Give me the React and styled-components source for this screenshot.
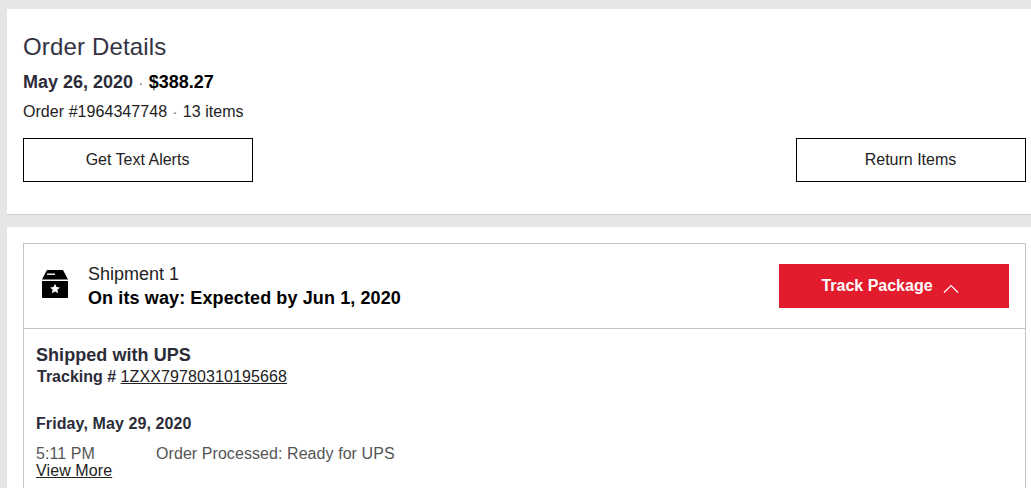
import styled, { createGlobalStyle } from 'styled-components'

const GlobalStyle = createGlobalStyle`
  html, body {
    margin: 0;
    padding: 0;
    height: 100%;
    overflow: hidden;
    background: #e5e5e5;
  }
  body {
    font-family: "Liberation Sans", Arial, sans-serif;
    color: #333;
  }
`

const Page = styled.div`
  padding: 9px 0 0 7px;
  height: 488px;
  box-sizing: border-box;
  overflow: hidden;
`

const SummaryCard = styled.section`
  background: #fff;
  height: 206px;
  box-sizing: border-box;
  padding: 24px 5px 0 16px;
  border-bottom: 1px solid #ccc;
  margin-bottom: 12px;
`

const PageTitle = styled.h1`
  margin: 0;
  font-size: 24px;
  font-weight: 400;
  line-height: 28px;
  letter-spacing: 0.15px;
  color: #333344;
`

const OrderMeta = styled.div`
  margin-top: 11px;
  font-size: 18px;
  font-weight: 700;
  line-height: 20px;
  color: #2c2c38;

  & strong {
    color: #000;
  }
`

const Dot = styled.span`
  font-weight: 400;
  color: #666;
  font-size: 14px;
  margin: 0 5.5px;
`

const OrderInfo = styled.div`
  margin-top: 9px;
  font-size: 16px;
  line-height: 20px;
  letter-spacing: 0.05px;
  color: #222;
`

const ActionRow = styled.div`
  display: flex;
  justify-content: space-between;
  margin-top: 16px;
`

const OutlineButton = styled.button`
  width: 230px;
  height: 44px;
  background: #fff;
  border: 1px solid #000;
  border-radius: 0;
  font-family: inherit;
  font-size: 16px;
  color: #222;
  padding: 0 1px 0 0;
`

const ShipmentCard = styled.section`
  background: #fff;
  height: 261px;
  box-sizing: border-box;
  padding: 16px 5px 0 16px;
`

const ShipmentBox = styled.div`
  border: 1px solid #c4c4c4;
  border-bottom: none;
  height: 245px;
  box-sizing: border-box;
`

const ShipmentHeader = styled.header`
  display: flex;
  align-items: center;
  height: 84px;
  padding: 0 16px 0 18px;
  border-bottom: 1px solid #c4c4c4;
`

const BoxIcon = styled.svg`
  width: 26px;
  height: 28px;
  flex: none;
  margin: 0 20px 4px 0;
`

const ShipmentText = styled.div`
  flex: 1;
`

const ShipmentName = styled.div`
  font-size: 18px;
  line-height: 24px;
  color: #222;
`

const ShipmentStatus = styled.div`
  font-size: 18px;
  font-weight: 700;
  line-height: 24px;
  letter-spacing: 0.11px;
  color: #000;
`

const TrackButton = styled.button`
  width: 230px;
  height: 44px;
  display: flex;
  align-items: center;
  justify-content: center;
  gap: 10px;
  background: #e31c2d;
  border: none;
  border-radius: 0;
  color: #fff;
  font-family: inherit;
  font-size: 16px;
  font-weight: 700;
  padding: 0 8px 0 0;
`

const Chevron = styled.svg`
  width: 16px;
  height: 9px;
  margin-top: 5px;
`

const ShipmentBody = styled.div`
  padding: 16px 12px 0;
`

const Carrier = styled.div`
  font-size: 18px;
  font-weight: 700;
  line-height: 20px;
  letter-spacing: 0.05px;
  color: #2c2c38;
`

const Tracking = styled.div`
  margin-top: 1px;
  font-size: 16px;
  line-height: 22px;
  color: #2c2c38;

  & b {
    font-weight: 700;
    margin-left: 1px;
  }
`

const TextLink = styled.a`
  color: #222;
  text-decoration: underline;
  letter-spacing: 0.1px;
`

const DayHeading = styled.div`
  margin-top: 26px;
  font-size: 16px;
  font-weight: 700;
  line-height: 20px;
  letter-spacing: 0.1px;
  color: #2c2c38;
`

const EventRow = styled.div`
  display: grid;
  grid-template-columns: 120px 1fr;
  margin-top: 10px;
  font-size: 16px;
  line-height: 20px;
  letter-spacing: 0.07px;
  color: #555;
`

const ViewMore = styled(TextLink)`
  display: block;
  margin-top: -1px;
  font-size: 16px;
  line-height: 16px;
`

export default function App() {
  return (
    <>
      <GlobalStyle />
      <Page>
        <SummaryCard>
          <PageTitle>Order Details</PageTitle>
          <OrderMeta>
            May 26, 2020<Dot>·</Dot>
            <strong>$388.27</strong>
          </OrderMeta>
          <OrderInfo>
            Order #1964347748<Dot>·</Dot>13 items
          </OrderInfo>
          <ActionRow>
            <OutlineButton type="button">Get Text Alerts</OutlineButton>
            <OutlineButton type="button">Return Items</OutlineButton>
          </ActionRow>
        </SummaryCard>
        <ShipmentCard>
          <ShipmentBox>
            <ShipmentHeader>
              <BoxIcon viewBox="0 0 26 28" aria-hidden="true">
                <path d="M5 0h16l5 9.500H0z" fill="#000" />
                <path d="M0 11h26v16a1 1 0 0 1-1 1H1a1 1 0 0 1-1-1z" fill="#000" />
                <path d="M5 3.500h8v1.400H5z" fill="#fff" />
                <path
                  d="M13 13.800l1.500 3.200 3.500.4-2.600 2.400.7 3.500-3.100-1.800-3.100 1.800.7-3.500-2.600-2.400 3.500-.4z"
                  fill="#fff"
                />
              </BoxIcon>
              <ShipmentText>
                <ShipmentName>Shipment 1</ShipmentName>
                <ShipmentStatus>On its way: Expected by Jun 1, 2020</ShipmentStatus>
              </ShipmentText>
              <TrackButton type="button">
                Track Package
                <Chevron viewBox="0 0 16 9" aria-hidden="true">
                  <path d="M1 8.500L8 1.500l7 7" fill="none" stroke="#fff" strokeWidth="1.200" />
                </Chevron>
              </TrackButton>
            </ShipmentHeader>
            <ShipmentBody>
              <Carrier>Shipped with UPS</Carrier>
              <Tracking>
                <b>Tracking #</b> <TextLink href="#">1ZXX79780310195668</TextLink>
              </Tracking>
              <DayHeading>Friday, May 29, 2020</DayHeading>
              <EventRow>
                <span>5:11 PM</span>
                <span>Order Processed: Ready for UPS</span>
              </EventRow>
              <ViewMore href="#">View More</ViewMore>
            </ShipmentBody>
          </ShipmentBox>
        </ShipmentCard>
      </Page>
    </>
  )
}
